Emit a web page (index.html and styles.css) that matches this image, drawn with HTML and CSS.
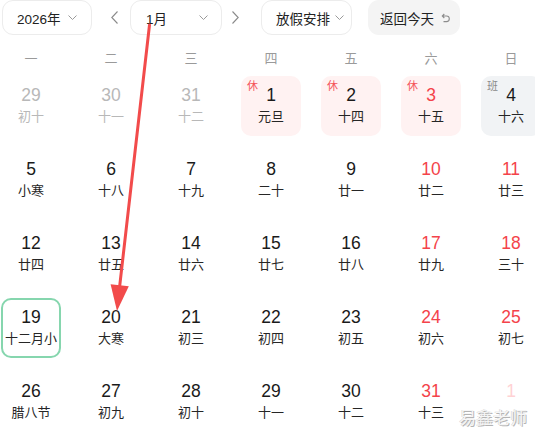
FILE: index.html
```html
<!DOCTYPE html>
<html lang="zh">
<head>
<meta charset="utf-8">
<link rel="stylesheet" href="styles.css">
</head>
<body>
<div class="page">
  <div class="toolbar">
    <div class="dd dd-year"><span>2026年</span><svg class="chev" viewBox="0 0 9 5" width="9" height="5"><polyline points="0.5,0.5 4.5,4.5 8.5,0.5"/></svg></div>
    <svg class="nav nav-prev" viewBox="0 0 7 13" width="7" height="13"><polyline points="6.5,0.5 0.8,6.5 6.5,12.5"/></svg>
    <div class="dd dd-month"><span>1月</span><svg class="chev" viewBox="0 0 9 5" width="9" height="5"><polyline points="0.5,0.5 4.5,4.5 8.5,0.5"/></svg></div>
    <svg class="nav nav-next" viewBox="0 0 7 13" width="7" height="13"><polyline points="0.5,0.5 6.2,6.5 0.5,12.5"/></svg>
    <div class="dd dd-holiday"><span>放假安排</span><svg class="chev" viewBox="0 0 9 5" width="9" height="5"><polyline points="0.5,0.5 4.5,4.5 8.5,0.5"/></svg></div>
    <div class="today-btn"><span>返回今天</span><svg class="undo" viewBox="0 0 9 10" width="9" height="10"><path d="M1.5 3 H5.5 A2.8 2.8 0 0 1 5.5 8.6 H2.5 M3.3 1 L1.3 3 L3.3 5"/></svg></div>
  </div>

  <div class="weekdays">
    <div>一</div><div>二</div><div>三</div><div>四</div><div>五</div><div>六</div><div>日</div>
  </div>

  <div class="grid">
    <div class="cell other"><div class="num">29</div><div class="lunar">初十</div></div>
    <div class="cell other"><div class="num">30</div><div class="lunar">十一</div></div>
    <div class="cell other"><div class="num">31</div><div class="lunar">十二</div></div>
    <div class="cell rest"><span class="tag">休</span><div class="num">1</div><div class="lunar">元旦</div></div>
    <div class="cell rest"><span class="tag">休</span><div class="num">2</div><div class="lunar">十四</div></div>
    <div class="cell rest weekend"><span class="tag">休</span><div class="num">3</div><div class="lunar">十五</div></div>
    <div class="cell work"><span class="tag">班</span><div class="num">4</div><div class="lunar">十六</div></div>

    <div class="cell"><div class="num">5</div><div class="lunar">小寒</div></div>
    <div class="cell"><div class="num">6</div><div class="lunar">十八</div></div>
    <div class="cell"><div class="num">7</div><div class="lunar">十九</div></div>
    <div class="cell"><div class="num">8</div><div class="lunar">二十</div></div>
    <div class="cell"><div class="num">9</div><div class="lunar">廿一</div></div>
    <div class="cell weekend"><div class="num">10</div><div class="lunar">廿二</div></div>
    <div class="cell weekend"><div class="num">11</div><div class="lunar">廿三</div></div>

    <div class="cell"><div class="num">12</div><div class="lunar">廿四</div></div>
    <div class="cell"><div class="num">13</div><div class="lunar">廿五</div></div>
    <div class="cell"><div class="num">14</div><div class="lunar">廿六</div></div>
    <div class="cell"><div class="num">15</div><div class="lunar">廿七</div></div>
    <div class="cell"><div class="num">16</div><div class="lunar">廿八</div></div>
    <div class="cell weekend"><div class="num">17</div><div class="lunar">廿九</div></div>
    <div class="cell weekend"><div class="num">18</div><div class="lunar">三十</div></div>

    <div class="cell today"><div class="num">19</div><div class="lunar">十二月小</div></div>
    <div class="cell"><div class="num">20</div><div class="lunar">大寒</div></div>
    <div class="cell"><div class="num">21</div><div class="lunar">初三</div></div>
    <div class="cell"><div class="num">22</div><div class="lunar">初四</div></div>
    <div class="cell"><div class="num">23</div><div class="lunar">初五</div></div>
    <div class="cell weekend"><div class="num">24</div><div class="lunar">初六</div></div>
    <div class="cell weekend"><div class="num">25</div><div class="lunar">初七</div></div>

    <div class="cell"><div class="num">26</div><div class="lunar">腊八节</div></div>
    <div class="cell"><div class="num">27</div><div class="lunar">初九</div></div>
    <div class="cell"><div class="num">28</div><div class="lunar">初十</div></div>
    <div class="cell"><div class="num">29</div><div class="lunar">十一</div></div>
    <div class="cell"><div class="num">30</div><div class="lunar">十二</div></div>
    <div class="cell weekend"><div class="num">31</div><div class="lunar">十三</div></div>
    <div class="cell other-next"><div class="num">1</div></div>
  </div>

  <div class="watermark">易鑫老师</div>

  <svg class="arrow" viewBox="0 0 535 437" width="535" height="437">
    <line x1="149.5" y1="25" x2="119.7" y2="286"/>
    <polygon points="117,311 110.6,284.2 128.8,286.2"/>
  </svg>
</div>
</body>
</html>
```

FILE: styles.css
```css
* { box-sizing: border-box; }
html, body { margin: 0; padding: 0; background: #fff; }
body {
  font-family: "Liberation Sans", "Noto Sans CJK SC", sans-serif;
  color: #1f1f1f;
  width: 535px;
  height: 437px;
  overflow: hidden;
}
.page { position: relative; width: 535px; height: 437px; }

.toolbar {
  display: flex;
  align-items: center;
  height: 35px;
  font-size: 13.5px;
  color: #222;
}
.dd {
  display: flex;
  align-items: center;
  justify-content: space-between;
  height: 35px;
  border: 1px solid #ececec;
  border-radius: 11px;
  background: #fff;
}
.chev polyline, .nav polyline {
  fill: none;
  stroke: #9a9a9a;
  stroke-width: 1;
}
.nav polyline { stroke: #8a8a8a; stroke-width: 1.1; }
.dd-year { margin-left: 2px; width: 90px; padding: 0 14px 0 14px; }
.nav-prev { margin-left: 19px; }
.dd-month { margin-left: 12px; width: 92px; padding: 0 13px 0 15px; }
.nav-next { margin-left: 10px; }
.dd-holiday { margin-left: 22px; width: 91px; padding: 0 7px 0 14px; }
.today-btn {
  margin-left: 16px;
  width: 92px;
  height: 35px;
  border-radius: 11px;
  background: #f4f4f4;
  display: flex;
  align-items: center;
  padding-left: 12px;
  gap: 7px;
}
.undo path { fill: none; stroke: #8c8c8c; stroke-width: 1.1; }

.weekdays {
  display: grid;
  grid-template-columns: repeat(7, 80px);
  margin-left: -9px;
  margin-top: 12px;
  height: 24px;
  line-height: 24px;
  font-size: 13px;
  color: #9a9a9a;
  text-align: center;
}

.grid {
  display: grid;
  grid-template-columns: repeat(7, 80px);
  grid-auto-rows: 60px;
  row-gap: 14px;
  margin-left: -9px;
  margin-top: 5px;
}
.cell {
  position: relative;
  justify-self: center;
  width: 60px;
  height: 60px;
  border-radius: 10px;
  display: flex;
  flex-direction: column;
  align-items: center;
  padding-top: 9px;
}
.num {
  font-size: 17.5px;
  line-height: 20px;
  color: #1a1a1a;
}
.lunar {
  margin-top: 3px;
  font-size: 13px;
  line-height: 18px;
  color: #262626;
  white-space: nowrap;
}
.weekend .num { color: #f4434a; }
.other .num, .other .lunar { color: #b8b8b8; }
.other-next .num { color: #ffd2d4; }
.rest { background: #fff2f2; }
.work { background: #f1f3f5; }
.tag {
  position: absolute;
  left: 6px;
  top: 3px;
  font-size: 11px;
  line-height: 14px;
  color: #f4545a;
}
.work .tag { color: #8a8a8a; }
.today { border: 2px solid #86d6ae; padding-top: 7px; }

.watermark {
  position: absolute;
  right: 8px;
  bottom: 8px;
  font-size: 17px;
  line-height: 20px;
  color: #f6f6f6;
  text-shadow: 1px 1px 0 #b4b4b4, -0.5px -0.5px 0 #d0d0d0;
}

.arrow {
  position: absolute;
  left: 0;
  top: 0;
  pointer-events: none;
}
.arrow line { stroke: #f24b4b; stroke-width: 3; stroke-linecap: round; }
.arrow polygon { fill: #f24b4b; }
```
